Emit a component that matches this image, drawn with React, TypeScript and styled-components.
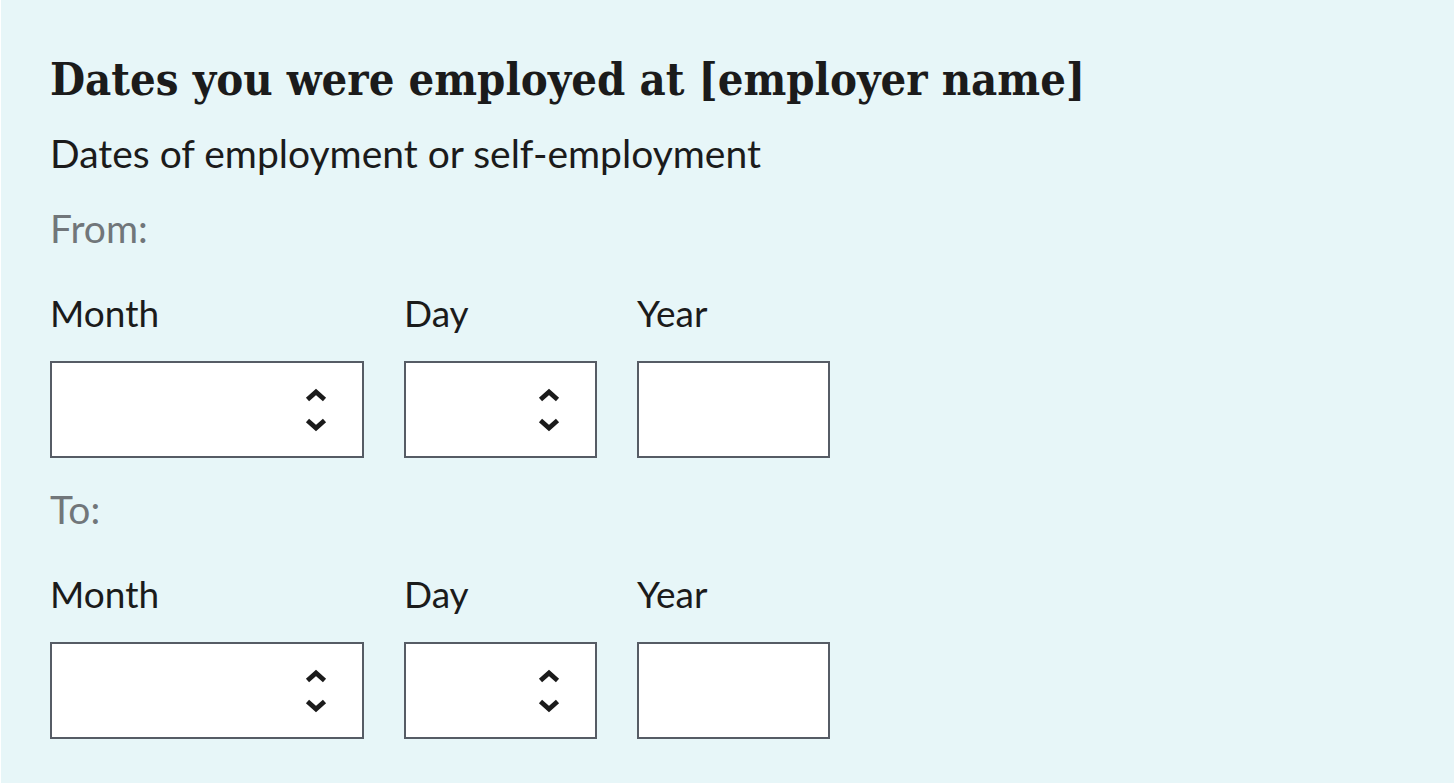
import React from 'react'
import styled, { createGlobalStyle } from 'styled-components'

const GlobalStyle = createGlobalStyle`
  html, body {
    margin: 0;
    padding: 0;
  }
  body {
    background: #e7f6f8;
    color: #1b1b1b;
    font-family: Lato, "Noto Sans", sans-serif;
  }
`

const Page = styled.div`
  min-height: 783px;
  box-sizing: border-box;
  background: #e7f6f8;
  border-left: 1px solid #ffffff;
  padding: 53px 0 0 49px;
`

const Heading = styled.h1`
  margin: 0;
  font-family: "DejaVu Serif Condensed", "DejaVu Serif", serif;
  font-stretch: condensed;
  font-weight: 700;
  font-size: 45px;
  line-height: 53px;
  color: #1b1b1b;
`

const Hint = styled.p`
  margin: 26px 0 0;
  font-size: 39px;
  line-height: 43px;
`

const Legend = styled.div<{ $top: number }>`
  margin-top: ${(p) => p.$top}px;
  font-size: 39px;
  line-height: 43px;
  color: #71767a;
`

const Row = styled.div`
  display: flex;
  gap: 40px;
  margin-top: 41px;
`

const Field = styled.div`
  display: flex;
  flex-direction: column;
`

const Label = styled.label`
  font-size: 37px;
  line-height: 43px;
  margin-bottom: 27px;
`

const Box = styled.div<{ $w: number }>`
  box-sizing: border-box;
  width: ${(p) => p.$w}px;
  height: 97px;
  background: #ffffff;
  border: 2px solid #565c65;
  display: flex;
  align-items: center;
  justify-content: flex-end;
  padding-right: 34px;
`

const Chevrons = () => (
  <svg width="24" height="44" viewBox="0 0 24 44" fill="none">
    <path d="M3.5 11.5 L12 4 L20.5 11.5" stroke="#1b1b1b" strokeWidth="4.8" />
    <path d="M3.5 32.5 L12 40 L20.5 32.5" stroke="#1b1b1b" strokeWidth="4.8" />
  </svg>
)

const DateRow = () => (
  <Row>
    <Field>
      <Label>Month</Label>
      <Box $w={314}>
        <Chevrons />
      </Box>
    </Field>
    <Field>
      <Label>Day</Label>
      <Box $w={193}>
        <Chevrons />
      </Box>
    </Field>
    <Field>
      <Label>Year</Label>
      <Box $w={193} />
    </Field>
  </Row>
)

export default function App() {
  return (
    <>
      <GlobalStyle />
      <Page>
        <Heading>Dates you were employed at [employer name]</Heading>
        <Hint>Dates of employment or self-employment</Hint>
        <Legend $top={32}>From:</Legend>
        <DateRow />
        <Legend $top={30}>To:</Legend>
        <DateRow />
      </Page>
    </>
  )
}
